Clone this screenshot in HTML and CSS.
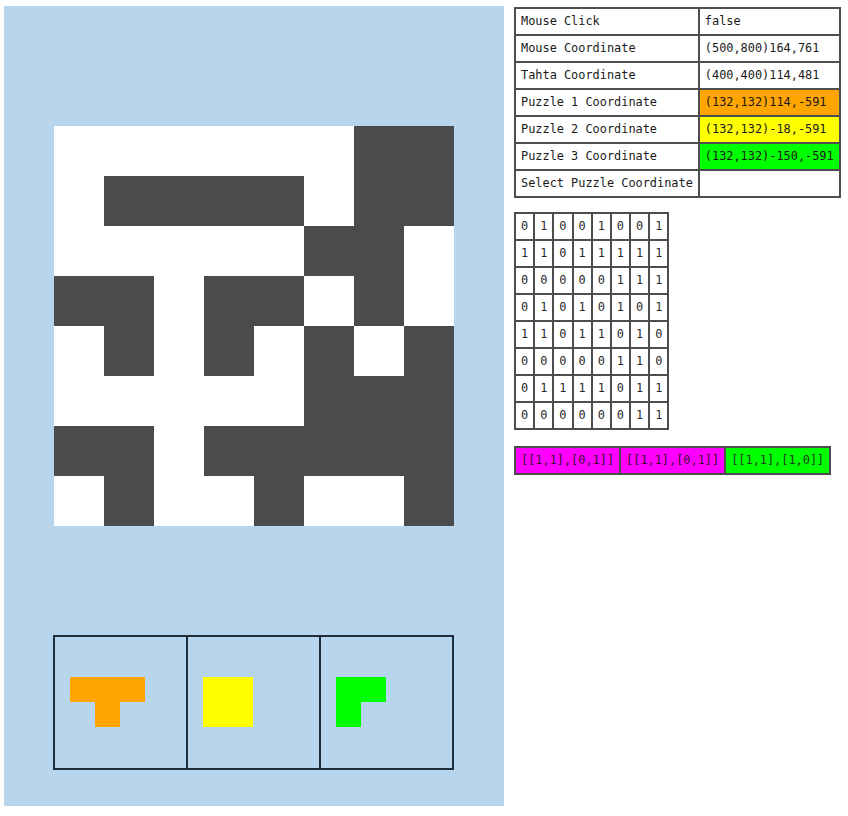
FILE: index.html
```html
<!DOCTYPE html>
<html>
<head>
<meta charset="utf-8">
<link rel="stylesheet" href="styles.css">
</head>
<body>
<div class="page">
  <div class="panel">
    <div class="board">
      <div class="w"></div><div class="w"></div><div class="w"></div><div class="w"></div><div class="w"></div><div class="w"></div><div class="d"></div><div class="d"></div>
      <div class="w"></div><div class="d"></div><div class="d"></div><div class="d"></div><div class="d"></div><div class="w"></div><div class="d"></div><div class="d"></div>
      <div class="w"></div><div class="w"></div><div class="w"></div><div class="w"></div><div class="w"></div><div class="d"></div><div class="d"></div><div class="w"></div>
      <div class="d"></div><div class="d"></div><div class="w"></div><div class="d"></div><div class="d"></div><div class="w"></div><div class="d"></div><div class="w"></div>
      <div class="w"></div><div class="d"></div><div class="w"></div><div class="d"></div><div class="w"></div><div class="d"></div><div class="w"></div><div class="d"></div>
      <div class="w"></div><div class="w"></div><div class="w"></div><div class="w"></div><div class="w"></div><div class="d"></div><div class="d"></div><div class="d"></div>
      <div class="d"></div><div class="d"></div><div class="w"></div><div class="d"></div><div class="d"></div><div class="d"></div><div class="d"></div><div class="d"></div>
      <div class="w"></div><div class="d"></div><div class="w"></div><div class="w"></div><div class="d"></div><div class="w"></div><div class="w"></div><div class="d"></div>
    </div>
    <div class="tray">
      <div class="slot">
        <div class="piece cols3">
          <div class="pc orange"></div><div class="pc orange"></div><div class="pc orange"></div>
          <div class="pc"></div><div class="pc orange"></div><div class="pc"></div>
        </div>
      </div>
      <div class="slot">
        <div class="piece cols2">
          <div class="pc yellow"></div><div class="pc yellow"></div>
          <div class="pc yellow"></div><div class="pc yellow"></div>
        </div>
      </div>
      <div class="slot">
        <div class="piece cols2">
          <div class="pc green"></div><div class="pc green"></div>
          <div class="pc green"></div><div class="pc"></div>
        </div>
      </div>
    </div>
  </div>
  <div class="side">
    <table class="info">
      <tr><td>Mouse Click</td><td>false</td></tr>
      <tr><td>Mouse Coordinate</td><td>(500,800)164,761</td></tr>
      <tr><td>Tahta Coordinate</td><td>(400,400)114,481</td></tr>
      <tr><td>Puzzle 1 Coordinate</td><td class="bg-orange">(132,132)114,-591</td></tr>
      <tr><td>Puzzle 2 Coordinate</td><td class="bg-yellow">(132,132)-18,-591</td></tr>
      <tr><td>Puzzle 3 Coordinate</td><td class="bg-green">(132,132)-150,-591</td></tr>
      <tr><td>Select Puzzle Coordinate</td><td></td></tr>
    </table>
    <table class="matrix">
      <tr><td>0</td><td>1</td><td>0</td><td>0</td><td>1</td><td>0</td><td>0</td><td>1</td></tr>
      <tr><td>1</td><td>1</td><td>0</td><td>1</td><td>1</td><td>1</td><td>1</td><td>1</td></tr>
      <tr><td>0</td><td>0</td><td>0</td><td>0</td><td>0</td><td>1</td><td>1</td><td>1</td></tr>
      <tr><td>0</td><td>1</td><td>0</td><td>1</td><td>0</td><td>1</td><td>0</td><td>1</td></tr>
      <tr><td>1</td><td>1</td><td>0</td><td>1</td><td>1</td><td>0</td><td>1</td><td>0</td></tr>
      <tr><td>0</td><td>0</td><td>0</td><td>0</td><td>0</td><td>1</td><td>1</td><td>0</td></tr>
      <tr><td>0</td><td>1</td><td>1</td><td>1</td><td>1</td><td>0</td><td>1</td><td>1</td></tr>
      <tr><td>0</td><td>0</td><td>0</td><td>0</td><td>0</td><td>0</td><td>1</td><td>1</td></tr>
    </table>
    <table class="arrays">
      <tr><td class="bg-magenta">[[1,1],[0,1]]</td><td class="bg-magenta">[[1,1],[0,1]]</td><td class="bg-green">[[1,1],[1,0]]</td></tr>
    </table>
  </div>
</div>
</body>
</html>
```

FILE: styles.css
```css
html, body {
  margin: 0;
  padding: 0;
  background: #ffffff;
}

.page {
  display: flex;
  align-items: flex-start;
  gap: 10px;
  padding: 6px 0 0 4px;
}

.panel {
  width: 500px;
  height: 800px;
  box-sizing: border-box;
  background: #b7d5ec;
  padding: 120px 0 0 50px;
  flex: none;
}

.board {
  display: grid;
  grid-template-columns: repeat(8, 50px);
  grid-template-rows: repeat(8, 50px);
  width: 400px;
  height: 400px;
}

.w { background: #ffffff; }
.d { background: #4b4b4b; }

.tray {
  display: flex;
  margin: 109px 0 0 -1px;
}

.slot {
  width: 135px;
  height: 135px;
  box-sizing: border-box;
  border: 2px solid #1f2d3b;
  padding: 40px 0 0 15px;
}

.slot + .slot {
  margin-left: -2px;
}

.piece {
  display: grid;
  grid-auto-rows: 25px;
}

.cols3 { grid-template-columns: repeat(3, 25px); }
.cols2 { grid-template-columns: repeat(2, 25px); }

.pc { width: 25px; height: 25px; }
.orange { background: #ffa500; }
.yellow { background: #ffff00; }
.green { background: #00ff00; }

.side {
  padding-top: 1px;
  display: flex;
  flex-direction: column;
  align-items: flex-start;
}

table {
  border-collapse: separate;
  border-spacing: 0;
  border: 1px solid #4d4d4d;
  font-family: "DejaVu Sans Mono", "Liberation Mono", monospace;
  font-size: 11.9px;
  color: #1a1a1a;
}

td {
  border: 1px solid #4d4d4d;
  padding: 0 5px;
  line-height: 25px;
  height: 25px;
  white-space: nowrap;
  background: #ffffff;
}

.matrix {
  margin-top: 14px;
  color: #2a2a2a;
}

.arrays {
  margin-top: 16px;
}

.arrays td {
  color: #3a1030;
}

.arrays td.bg-green {
  color: #1f3a1f;
}

.bg-orange { background: #ffa500; }
.bg-yellow { background: #ffff00; }
.bg-green { background: #00ff00; }
.bg-magenta { background: #ff00ff; }
```
